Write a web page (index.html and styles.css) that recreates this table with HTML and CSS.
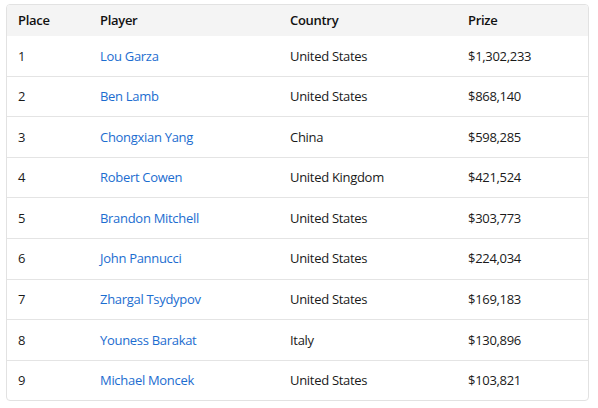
FILE: index.html
```html
<!DOCTYPE html>
<html>
<head>
<meta charset="utf-8">
<link rel="stylesheet" href="styles.css">
</head>
<body>
<div class="wrap">
<table class="results">
<colgroup>
<col class="c-place"><col class="c-player"><col class="c-country"><col class="c-prize">
</colgroup>
<thead>
<tr><th>Place</th><th>Player</th><th>Country</th><th>Prize</th></tr>
</thead>
<tbody>
<tr><td>1</td><td><a href="#">Lou Garza</a></td><td>United States</td><td>$1,302,233</td></tr>
<tr><td>2</td><td><a href="#">Ben Lamb</a></td><td>United States</td><td>$868,140</td></tr>
<tr><td>3</td><td><a href="#">Chongxian Yang</a></td><td>China</td><td>$598,285</td></tr>
<tr><td>4</td><td><a href="#">Robert Cowen</a></td><td>United Kingdom</td><td>$421,524</td></tr>
<tr><td>5</td><td><a href="#">Brandon Mitchell</a></td><td>United States</td><td>$303,773</td></tr>
<tr><td>6</td><td><a href="#">John Pannucci</a></td><td>United States</td><td>$224,034</td></tr>
<tr><td>7</td><td><a href="#">Zhargal Tsydypov</a></td><td>United States</td><td>$169,183</td></tr>
<tr><td>8</td><td><a href="#">Youness Barakat</a></td><td>Italy</td><td>$130,896</td></tr>
<tr><td>9</td><td><a href="#">Michael Moncek</a></td><td>United States</td><td>$103,821</td></tr>
</tbody>
</table>
</div>
</body>
</html>
```
FILE: styles.css
```css
html, body { margin: 0; padding: 0; background: #fff; }
body { font-family: "Open Sans", "Liberation Sans", sans-serif; font-size: 13px; letter-spacing: -0.3px; color: #1a1a1a; }
.wrap {
  margin: 4px 0 0 6px;
  width: 583px;
  box-sizing: border-box;
  border: 1px solid #e2e2e2;
  border-radius: 4px;
  overflow: hidden;
}
.results { width: 100%; border-collapse: collapse; table-layout: fixed; }
.c-place { width: 82px; }
.c-player { width: 190px; }
.c-country { width: 178px; }
.c-prize { width: 131px; }
.results th {
  background: #f4f4f4;
  text-align: left;
  font-weight: 600;
  padding: 6px 11px;
  line-height: 19px;
  color: #111;
}
.results td {
  padding: 10.5px 11px 9.5px;
  line-height: 19.6px;
  border-bottom: 1px solid #e4e4e4;
}
.results tbody tr:last-child td { border-bottom: none; }
.results a { color: #1c6dd0; text-decoration: none; }
```
